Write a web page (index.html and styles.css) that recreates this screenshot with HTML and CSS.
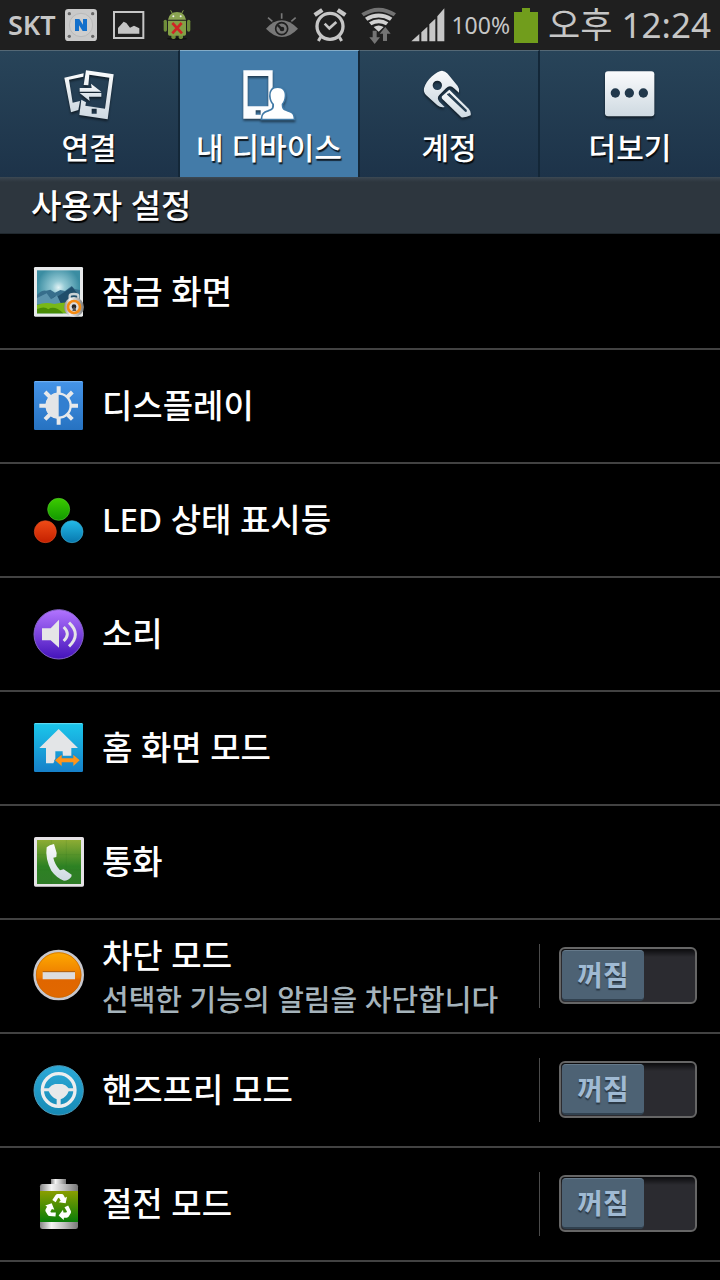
FILE: index.html
```html
<!DOCTYPE html>
<html lang="ko">
<head>
    <meta charset="UTF-8">
    <meta name="viewport" content="width=device-width, initial-scale=1">
    <title>설정</title>
    <link rel="stylesheet" href="styles.css">
</head>
<body>
    <header class="status-bar">
        <span class="carrier">SKT</span>
        <svg class="status-n" width="32" height="32" viewBox="195 27 96 96">
            <rect x="195" y="27" width="96" height="96" rx="10" fill="#c9c9c9"/>
            <circle cx="243" cy="75" r="35" fill="#cecece" stroke="#b9b9b9" stroke-width="3"/>
            <g fill="#666"><circle cx="208" cy="41" r="5"/><circle cx="278" cy="41" r="5"/><circle cx="208" cy="109" r="5"/><circle cx="278" cy="109" r="5"/></g>
            <path d="M225 57h13l11 17V57h12v36h-13l-11-17v17h-12z" fill="#1470cb"/>
        </svg>
        <svg class="status-image" width="32" height="28" viewBox="339 33 96 84">
            <rect x="342" y="36" width="88" height="78" fill="none" stroke="#c6c6c6" stroke-width="6"/>
            <path d="M354 101V84l17-19 8 4 11 14 12-6 16 8v16z" fill="#c6c6c6"/>
        </svg>
        <svg width="28" height="30" viewBox="488 30 84 90">
            <ellipse cx="530" cy="116" rx="30" ry="4" fill="#111"/>
            <path d="M517 42l-6-11M543 42l6-11" stroke="#87a34b" stroke-width="3"/>
            <path d="M503 59q4-23 27-23t27 23z" fill="#8ba552"/>
            <circle cx="519" cy="49" r="3" fill="#eee"/><circle cx="541" cy="49" r="3" fill="#eee"/>
            <g fill="#6f8d3a"><rect x="490" y="59" width="10" height="36" rx="5"/><rect x="560" y="59" width="10" height="36" rx="5"/><rect x="513" y="98" width="13" height="19" rx="5"/><rect x="535" y="98" width="13" height="19" rx="5"/></g>
            <path d="M503 62h54v40q0 5-5 5h-44q-5 0-5-5z" fill="#84a046"/>
            <path d="M516 69l29 31M544 69l-28 31" stroke="#cf2525" stroke-width="8"/>
        </svg>
        <div class="status-right">
            <svg class="status-eye" width="32" height="26" viewBox="54 36 96 78">
                <path d="M54 86q46-50 96 0-48 50-96 0z" fill="#787878"/>
                <circle cx="101" cy="86" r="18" fill="#787878" stroke="#1f1f1f" stroke-width="5"/>
                <path d="M102 88L91 77" stroke="#1f1f1f" stroke-width="7" stroke-linecap="round"/>
                <circle cx="102" cy="87" r="7" fill="#1f1f1f"/>
                <path d="M101 40v16M60 53l13 11M143 53l-13 11" stroke="#787878" stroke-width="5"/>
            </svg>
            <svg width="34" height="34" viewBox="196 25 102 102">
                <g stroke="#c6c6c6" fill="none">
                    <circle cx="247" cy="80" r="39" stroke-width="10"/>
                    <path d="M201 46l23-15M293 46l-23-15" stroke-width="13"/>
                    <path d="M219 112l-7 12M275 112l7 12" stroke-width="9"/>
                    <path d="M231 72l14 14 21-19" stroke-width="8"/>
                </g>
            </svg>
            <svg width="36" height="37" viewBox="336 19 108 111">
                <path d="M337 38q52-34 104 0l-7 9q-45-28-90 0z" fill="#727272"/>
                <path d="M348 51q41-25 82 0l-7 9q-34-19-68 0zM360 65q29-18 58 0l-7 9q-22-13-44 0zM374 79q15-9 30 0l-15 14z" fill="#d0d0d0"/>
                <path d="M371 90h12v20h10l-16 20-16-20h10zM402 121V99h-10l17-20 16 20h-11v22z" fill="#747474"/>
            </svg>
            <svg width="34" height="34" viewBox="482 29 102 102">
                <path d="M483 129l24-22v22zM513 129v-27l18-17v44zM537 129V78l18-17v68zM561 129V54l21-24v99z" fill="#c6c6c6"/>
            </svg>
            <span class="battery-level">100%</span>
            <svg width="24" height="36" viewBox="0 0 24 36"><path d="M0 5h8V1h8v4h8v31H0z" fill="#719d1c"/></svg>
            <time class="clock" datetime="12:24">오후 12:24</time>
        </div>
    </header>

    <svg class="defs" width="0" height="0" aria-hidden="true">
        <defs>
            <linearGradient id="silver" x2="0" y2="1"><stop stop-color="#fafbfc"/><stop offset="1" stop-color="#ced9e1"/></linearGradient>
            <linearGradient id="metal"><stop stop-color="#858585"/><stop offset=".3" stop-color="#f5f5f5"/><stop offset=".65" stop-color="#bdbdbd"/><stop offset="1" stop-color="#777"/></linearGradient>
            <radialGradient id="sky" cy=".4"><stop stop-color="#e2f3f5"/><stop offset=".3" stop-color="#95cad5"/><stop offset="1" stop-color="#3b8da2"/></radialGradient>
            <linearGradient id="blue" x2="0" y2="1"><stop stop-color="#4594e8"/><stop offset="1" stop-color="#2672c1"/></linearGradient>
            <linearGradient id="green" x2="0" y2="1"><stop stop-color="#3ccb00"/><stop offset="1" stop-color="#129900"/></linearGradient>
            <linearGradient id="red" x2="0" y2="1"><stop stop-color="#ef4b16"/><stop offset="1" stop-color="#c42000"/></linearGradient>
            <linearGradient id="cyan" x2="0" y2="1"><stop stop-color="#23bae8"/><stop offset="1" stop-color="#0878ae"/></linearGradient>
            <linearGradient id="purple" x2="0" y2="1"><stop stop-color="#b274ff"/><stop offset="1" stop-color="#4413ba"/></linearGradient>
            <linearGradient id="home" x2="0" y2="1"><stop stop-color="#1bc7eb"/><stop offset="1" stop-color="#1680c9"/></linearGradient>
            <linearGradient id="call" x2="0" y2="1"><stop stop-color="#8dac34"/><stop offset=".6" stop-color="#2d8123"/><stop offset="1" stop-color="#307c28"/></linearGradient>
            <linearGradient id="orange" x2="0" y2="1"><stop stop-color="#ffac00"/><stop offset=".55" stop-color="#ec7900"/><stop offset=".6" stop-color="#e06600"/><stop offset="1" stop-color="#e16800"/></linearGradient>
            <linearGradient id="wheel" x2="0" y2="1"><stop stop-color="#2ca9d7"/><stop offset="1" stop-color="#168ab5"/></linearGradient>
            <linearGradient id="eco" x2="0" y2="1"><stop stop-color="#8a9e00"/><stop offset="1" stop-color="#087d08"/></linearGradient>
        </defs>
    </svg>

    <nav class="tabs">
        <a class="tab" href="#connections">
            <svg width="50" height="50" viewBox="190 59 150 150">
                <g fill="url(#silver)">
                    <path d="M191 82l58-13-1 10-43 9 11 69 22-5-5 27-22 7z"/>
                    <path fill-rule="evenodd" d="M256 60l83 12-18 135-85-13 6-46 14 8-2 10 59 9 13-93-60-9-3 32-14-1zM273 175v15h15v-15z"/>
                    <path d="M237 113h36l-2-13 31 24h-65zM302 128v11h-37l2 13-30-24z"/>
                </g>
            </svg>
            <span>연결</span>
        </a>
        <a class="tab active" href="#device" aria-current="page">
            <svg width="50" height="50" viewBox="733 59 150 150">
                <path fill="#fbfcfe" fill-rule="evenodd" d="M731 60h88v145h-88zM744 77v91h62V77zM768 180v13h15v-13z"/>
                <path d="M834 113c15 0 22 10 21 24-1 12-4 18-9 24 0 16 4 18 18 23 13 4 17 7 18 21h-94c1-13 5-17 18-21 14-5 18-8 17-23-6-6-9-12-10-24-1-14 6-24 21-24z" fill="#fff" stroke="#417aa7" stroke-width="10" paint-order="stroke"/>
            </svg>
            <span>내 디바이스</span>
        </a>
        <a class="tab" href="#accounts">
            <svg width="50" height="50" viewBox="192 59 150 150">
                <path fill="url(#silver)" fill-rule="evenodd" d="M246 61q10 1 17 9l30 37q6 8 4 20l-15-13q-12-13-24 0l-20 20q-9 9 0 20l16 16q-12 3-22-5l-34-31q-8-8-6-20 6-20 24-36 18-16 30-17zM232 91a14 14 0 1 0 0 28 14 14 0 0 0 0-28z"/>
                <path fill="url(#silver)" d="M246 138l22-20 58 57q8 8 6 20-13 7-28 6l-56-54q-4-4-2-9z"/>
                <path d="M262 131l54 51q4 3 2-3l-52-50" fill="none" stroke="#253d50" stroke-width="4"/>
            </svg>
            <span>계정</span>
        </a>
        <a class="tab" href="#more">
            <svg width="50" height="50" viewBox="734 59 150 150">
                <rect x="734" y="63" width="148" height="135" rx="9" fill="url(#silver)"/>
                <g fill="#21384b"><circle cx="765" cy="128" r="14"/><circle cx="807" cy="128" r="14"/><circle cx="849" cy="128" r="14"/></g>
            </svg>
            <span>더보기</span>
        </a>
    </nav>

    <main>
        <h1 class="section-title">사용자 설정</h1>
        <ul class="settings">
            <li class="row">
                <a class="item" href="#lock-screen">
                    <svg class="icon" viewBox="42 51 150 150">
                        <rect x="42" y="51" width="147" height="149" rx="4" fill="#e8eaeb"/>
                        <rect x="51" y="61" width="129" height="129" fill="url(#sky)"/>
                        <path d="M51 135q14-15 27-13l13-3 14 9 16-8 14 3 20-15 9 9 16 3v43H51z" fill="#376e8c"/>
                        <path d="M92 155q4-18 23-17l23-15 18-13 24 30v24H92z" fill="#204e6b"/>
                        <path d="M51 144l29-14 13 18 18-12 12 26H51z" fill="#5c94ae"/>
                        <path d="M51 165q25-10 52-3 34-9 77 0v28H51z" fill="#79b817"/>
                        <path d="M51 177q23-10 34 1 18-13 45 12H51z" fill="#498b06"/>
                        <path d="M149 151v-13q0-6 13-6t13 6v13" fill="none" stroke="#cbd2d5" stroke-width="7"/>
                        <circle cx="162" cy="171" r="30" fill="url(#metal)"/>
                        <circle cx="162" cy="171" r="18" fill="#ddd" stroke="#f58b12" stroke-width="8"/>
                        <circle cx="162" cy="170" r="7" fill="#252525"/><path d="M160 172h5l4 11h-12z" fill="#555"/>
                    </svg>
                    <span class="title">잠금 화면</span>
                </a>
            </li>
            <li class="row">
                <a class="item" href="#display">
                    <svg class="icon" viewBox="42 393 150 150">
                        <rect x="42" y="393" width="147" height="147" rx="4" fill="url(#blue)"/>
                        <path d="M45 395h141" stroke="#75b2f2" stroke-width="3"/>
                        <g stroke="#e7e9eb" stroke-width="12"><path d="M116 409v115M58 467h116M75 426l82 82M157 426l-82 82"/></g>
                        <circle cx="116" cy="467" r="36" fill="#327fd0" stroke="#e7e9eb" stroke-width="7"/>
                        <path d="M116 428a39 39 0 0 0 0 78z" fill="#e3e5e7"/>
                    </svg>
                    <span class="title">디스플레이</span>
                </a>
            </li>
            <li class="row">
                <a class="item" href="#led">
                    <svg class="icon" viewBox="42 30 150 150">
                        <circle cx="116" cy="73" r="33" fill="url(#green)" stroke="#51c52a" stroke-width="2"/>
                        <circle cx="76" cy="140" r="33" fill="url(#red)" stroke="#d94a20" stroke-width="2"/>
                        <circle cx="156" cy="140" r="33" fill="url(#cyan)" stroke="#3da9cd" stroke-width="2"/>
                    </svg>
                    <span class="title">LED 상태 표시등</span>
                </a>
            </li>
            <li class="row">
                <a class="item" href="#sound">
                    <svg class="icon" viewBox="42 372 150 150">
                        <circle cx="116" cy="448" r="74" fill="url(#purple)" stroke="#8563c9" stroke-width="3"/>
                        <path d="M66 430h26l25-26v84l-25-22H66z" fill="#e5e5e7"/>
                        <path d="M131 426q22 21 0 42M147 413q38 35 0 71" fill="none" stroke="#e5e5e7" stroke-width="9"/>
                    </svg>
                    <span class="title">소리</span>
                </a>
            </li>
            <li class="row">
                <a class="item" href="#home-mode">
                    <svg class="icon" viewBox="42 39 150 150">
                        <rect x="42" y="39" width="147" height="147" rx="4" fill="url(#home)"/>
                        <path d="M45 41h141" stroke="#68dcf2" stroke-width="3"/>
                        <path d="M116 57l58 57h-20v23h-26v-13h-22v24l-6 12H78v-46H58z" fill="#e3e5e7"/>
                        <path d="M105 151l20-17v11h35v-11l19 17-19 17v-11h-35v11z" fill="#ff951b" stroke="#1b8dcc" stroke-width="4" paint-order="stroke"/>
                    </svg>
                    <span class="title">홈 화면 모드</span>
                </a>
            </li>
            <li class="row">
                <a class="item" href="#call">
                    <svg class="icon" viewBox="42 381 150 150">
                        <rect x="42" y="381" width="150" height="149" rx="5" fill="#e6e3e6"/>
                        <rect x="51" y="390" width="132" height="132" fill="url(#call)"/>
                        <path d="M94 390v132M139 390v132M51 434h132M51 479h132" stroke="#286c20" stroke-opacity=".2" stroke-width="2"/>
                        <path d="M80 412q8-8 22-10l8 27-1 12-9 2q4 20 20 38l11-3 24 16-1 6q-9 12-22 12-22-8-38-30-19-35-14-70z" fill="url(#silver)"/>
                    </svg>
                    <span class="title">통화</span>
                </a>
            </li>
            <li class="row">
                <a class="item" href="#blocking">
                    <svg class="icon" viewBox="42 62 150 150">
                        <circle cx="116" cy="134" r="72" fill="url(#orange)" stroke="#c7c7cd" stroke-width="8"/>
                        <circle cx="116" cy="134" r="67" fill="none" stroke="#c46700" stroke-width="2"/>
                        <path d="M68 124h97v23H68z" fill="#ddd"/><path d="M68 124h97" stroke="#aa5c0c" stroke-width="3"/>
                    </svg>
                    <span class="text">
                        <span class="title">차단 모드</span>
                        <span class="summary">선택한 기능의 알림을 차단합니다</span>
                    </span>
                </a>
                <div class="switch-area">
                    <label class="switch"><input type="checkbox" role="switch" aria-label="차단 모드"><span class="thumb">꺼짐</span></label>
                </div>
            </li>
            <li class="row">
                <a class="item" href="#hands-free">
                    <svg class="icon" viewBox="42 405 150 150">
                        <circle cx="116" cy="481" r="74" fill="url(#wheel)" stroke="#4c9dbd" stroke-width="3"/>
                        <circle cx="116" cy="480" r="49" fill="none" stroke="#eceeef" stroke-width="10"/>
                        <path d="M68 475h18q8-10 19-13h22q11 3 19 13h18v9h-18q-6 17-24 24v23h-12v-23q-17-7-24-24H68z" fill="#e7e9ea"/>
                    </svg>
                    <span class="title">핸즈프리 모드</span>
                </a>
                <div class="switch-area">
                    <label class="switch"><input type="checkbox" role="switch" aria-label="핸즈프리 모드"><span class="thumb">꺼짐</span></label>
                </div>
            </li>
            <li class="row">
                <a class="item" href="#power-saving">
                    <svg class="icon" viewBox="42 117 150 150">
                        <rect x="93" y="117" width="45" height="18" fill="url(#metal)"/>
                        <rect x="60" y="132" width="114" height="135" rx="7" fill="url(#metal)"/>
                        <rect x="60" y="153" width="114" height="93" fill="url(#eco)"/>
                        <g fill="#fff">
                            <path id="arrow" d="M97 180l10-15q2-3 6-3h12q4 0 6 4l4 7 6-3-4 20-21-3 6-5-4-7q-2-3-4 0l-7 12z"/>
                            <use href="#arrow" transform="rotate(120 116 202)"/>
                            <use href="#arrow" transform="rotate(240 116 202)"/>
                        </g>
                    </svg>
                    <span class="title">절전 모드</span>
                </a>
                <div class="switch-area">
                    <label class="switch"><input type="checkbox" role="switch" aria-label="절전 모드"><span class="thumb">꺼짐</span></label>
                </div>
            </li>
        </ul>
    </main>
</body>
</html>
```

FILE: styles.css
```css
* {
    box-sizing: border-box;
}
body {
    margin: 0;
    background-color: #000;
    color: #fff;
    font-family: "Noto Sans", "Noto Sans CJK KR", sans-serif;
}
a {
    color: inherit;
    text-decoration: none;
}
svg {
    display: block;
    flex-shrink: 0;
    overflow: visible;
}
.defs {
    position: absolute;
}

/* status bar */
.status-bar {
    display: flex;
    align-items: center;
    height: 50px;
    padding: 0 9px 0 8px;
    background-color: #1f1f1f;
    color: #c6c6c6;
    line-height: 48px;
    white-space: nowrap;
}
.carrier {
    font-size: 27px;
    font-weight: 600;
}
.status-n {
    margin-left: 9px;
}
.status-image {
    margin: 0 18px 0 16px;
}
.status-right {
    display: flex;
    align-items: center;
    margin-left: auto;
}
.status-eye {
    margin-right: 15px;
}
.status-right svg + svg {
    margin-right: 14px;
}
.status-right svg + svg:has(+ .battery-level) {
    margin-right: 6px;
}
.battery-level {
    margin-right: 4px;
    font-size: 23px;
}
.clock {
    margin-left: 10px;
    font-size: 35px;
}

/* tabs */
.tabs {
    display: grid;
    grid-template-columns: repeat(4, 1fr);
    border-bottom: 1px solid #3b4751;
}
.tab {
    display: flex;
    flex-direction: column;
    align-items: center;
    height: 127px;
    padding-top: 19px;
    border-top: 1px solid #546875;
    border-right: 2px solid #132738;
    background: linear-gradient(#284459, #1d3349);
    font-size: 30px;
    font-weight: 500;
    line-height: 56px;
    text-shadow: 1px 2px 1px rgba(0, 0, 0, 0.8);
    white-space: nowrap;
}
.tab:last-child {
    border-right: none;
}
.tab.active {
    border-top-color: #83acc8;
    background: #437ba8;
}
.tab svg {
    filter: drop-shadow(0 2px 1px rgba(0, 0, 0, 0.5));
}

/* list */
.section-title {
    margin: 0;
    padding: 1px 0 0 31px;
    border-bottom: 1px solid #20282e;
    background: linear-gradient(#38434d, #2d363e 4px);
    font-size: 33px;
    font-weight: 500;
    line-height: 54px;
    text-shadow: 1px 2px 1px #000;
}
.settings {
    margin: 0;
    padding: 2px 0 0;
    list-style: none;
}
.row {
    display: flex;
    align-items: center;
    height: 114px;
    border-bottom: 2px solid #424242;
}
.item {
    display: flex;
    flex: 1;
    align-items: center;
    gap: 18px;
    height: 100%;
    padding-left: 34px;
}
.icon {
    width: 50px;
    height: 50px;
}
.text {
    padding-top: 4px;
}
.title {
    display: block;
    font-size: 33px;
    font-weight: 500;
    line-height: 44px;
}
.summary {
    display: block;
    color: #a5b3bb;
    font-size: 29px;
    font-weight: 500;
    line-height: 44px;
}
.switch-area {
    display: flex;
    align-items: center;
    height: 64px;
    padding: 0 23px 2px 19px;
    border-left: 1px solid #4b4b4b;
}
.switch {
    position: relative;
    display: block;
    width: 138px;
    height: 57px;
    padding: 1px;
    border: 2px solid #666;
    border-radius: 6px;
    background: linear-gradient(#0b0b0d, #2b2b30 8px);
    cursor: pointer;
}
.switch input {
    position: absolute;
    inset: 0;
    width: 100%;
    height: 100%;
    margin: 0;
    opacity: 0;
}
.thumb {
    display: block;
    width: 82px;
    height: 51px;
    border-top: 1px solid #65798a;
    border-bottom: 2px solid #31414f;
    border-radius: 4px;
    background-color: #4d6274;
    color: #a0bad3;
    font-size: 28px;
    font-weight: 700;
    line-height: 48px;
    text-align: center;
    text-shadow: 0 2px 1px #2b3844;
}
.switch input:checked + .thumb {
    margin-left: auto;
}
```
